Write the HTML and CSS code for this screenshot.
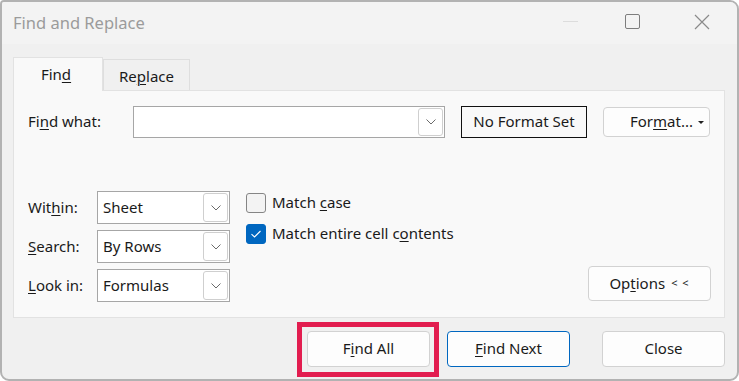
FILE: index.html
```html
<!DOCTYPE html>
<html lang="en">
<head>
  <meta charset="UTF-8">
  <meta name="viewport" content="width=device-width, initial-scale=1.0">
  <title>Find and Replace</title>
  <link rel="stylesheet" href="styles.css">
</head>
<body>
  <div class="window">
    <div class="titlebar">
      <span class="title">Find and Replace</span>
      <div class="controls">
        <span class="ctl ctl-min"><span class="min-line"></span></span>
        <span class="ctl"><span class="max-box"></span></span>
        <span class="ctl">
          <svg width="16" height="16" viewBox="0 0 16 16"><path d="M1 1 L15 15 M15 1 L1 15" stroke="#8a8a8a" stroke-width="1.2" fill="none"/></svg>
        </span>
      </div>
    </div>

    <div class="content">
      <div class="tabs">
        <div class="tab active">Fin<u>d</u></div>
        <div class="tab">Re<u>p</u>lace</div>
      </div>

      <div class="panel">
        <div class="find-row">
          <label class="find-label">Fi<u>n</u>d what:</label>
          <div class="combo combo-find">
            <span class="combo-text"></span>
            <span class="drop"><svg width="10" height="6" viewBox="0 0 10 6"><path d="M0.5 0.5 L5 5 L9.5 0.5" stroke="#6a6a6a" fill="none"/></svg></span>
          </div>
          <div class="format-preview">No Format Set</div>
          <button class="btn btn-format">For<u>m</u>at... <span class="tri"></span></button>
        </div>

        <div class="options-area">
          <div class="selects">
            <label>Wit<u>h</u>in:</label>
            <div class="combo">
              <span class="combo-text">Sheet</span>
              <span class="drop"><svg width="10" height="6" viewBox="0 0 10 6"><path d="M0.5 0.5 L5 5 L9.5 0.5" stroke="#6a6a6a" fill="none"/></svg></span>
            </div>
            <label><u>S</u>earch:</label>
            <div class="combo">
              <span class="combo-text">By Rows</span>
              <span class="drop"><svg width="10" height="6" viewBox="0 0 10 6"><path d="M0.5 0.5 L5 5 L9.5 0.5" stroke="#6a6a6a" fill="none"/></svg></span>
            </div>
            <label><u>L</u>ook in:</label>
            <div class="combo">
              <span class="combo-text">Formulas</span>
              <span class="drop"><svg width="10" height="6" viewBox="0 0 10 6"><path d="M0.5 0.5 L5 5 L9.5 0.5" stroke="#6a6a6a" fill="none"/></svg></span>
            </div>
          </div>

          <div class="checks">
            <div class="check-row">
              <span class="box"></span>
              <span class="check-label">Match <u>c</u>ase</span>
            </div>
            <div class="check-row">
              <span class="box checked">
                <svg width="12" height="10" viewBox="0 0 12 10"><path d="M1.5 5.2 L4.5 8 L10.5 2" stroke="#fff" stroke-width="1.1" fill="none"/></svg>
              </span>
              <span class="check-label">Match entire cell c<u>o</u>ntents</span>
            </div>
          </div>

          <button class="btn btn-options">Op<u>t</u>ions <span class="small">&lt; &lt;</span></button>
        </div>
      </div>

      <div class="footer">
        <div class="highlight">
          <button class="btn btn-foot">F<u>i</u>nd All</button>
        </div>
        <button class="btn btn-foot btn-default"><u>F</u>ind Next</button>
        <button class="btn btn-foot btn-close">Close</button>
      </div>
    </div>
  </div>
</body>
</html>
```

FILE: styles.css
```css
* {
  box-sizing: border-box;
}
body {
  margin: 0;
  background: #ffffff;
  font-family: "Noto Sans", "Open Sans", sans-serif;
  font-size: 15px;
  color: #1a1a1a;
}
u {
  text-decoration-thickness: 1px;
  text-underline-offset: 2px;
}
.window {
  width: 739px;
  height: 381px;
  border: 2px solid #b2b2b2;
  border-radius: 4px 9px 9px 9px;
  background: #f0f0f0;
  overflow: hidden;
}
.titlebar {
  height: 42px;
  background: #f3f3f3;
  display: flex;
  align-items: center;
  justify-content: space-between;
  padding-left: 11px;
}
.title {
  font-size: 16.5px;
  color: #9b9b9b;
  margin-top: -2px;
}
.controls {
  display: flex;
  height: 100%;
}
.ctl {
  width: 70px;
  display: flex;
  align-items: center;
  justify-content: center;
  margin-top: -3px;
}
.ctl-min {
  width: 54px;
}
.min-line {
  width: 15px;
  height: 1px;
  background: #dcdcdc;
}
.max-box {
  width: 15px;
  height: 15px;
  border: 1.2px solid #7d7d7d;
  border-radius: 2px;
}
.content {
  padding: 13px 11px 0 11px;
}
.tabs {
  display: flex;
  align-items: flex-end;
  height: 33px;
  position: relative;
  z-index: 1;
}
.tab {
  height: 31px;
  width: 87px;
  border: 1px solid #dedede;
  border-bottom: none;
  background: #f0f0f0;
  display: flex;
  align-items: center;
  justify-content: center;
  padding-top: 1px;
}
.tab.active {
  height: 34px;
  width: 90px;
  background: #f9f9f9;
  border-color: #e2e2e2;
  margin-bottom: -1px;
  padding-top: 0;
  padding-bottom: 1px;
  padding-right: 4px;
}
.panel {
  width: 712px;
  height: 228px;
  background: #f9f9f9;
  border: 1px solid #e2e2e2;
  padding: 15px 13px 0 13px;
}
.find-row {
  display: flex;
  align-items: center;
  height: 32px;
}
.find-label {
  width: 106px;
  padding-left: 1px;
  padding-bottom: 2px;
}
.selects label,
.combo-text,
.check-label {
  padding-bottom: 2px;
}
.combo {
  height: 33px;
  width: 133px;
  border: 1px solid #a6a6a6;
  background: #ffffff;
  display: flex;
  align-items: center;
  padding: 1px;
}
.combo-text {
  flex: 1;
  padding-left: 4px;
}
.drop {
  width: 25px;
  height: 29px;
  border: 1px solid #cfcfcf;
  border-radius: 3px;
  display: flex;
  align-items: center;
  justify-content: center;
}
.combo-find {
  width: 312px;
  height: 32px;
  margin-right: 16px;
}
.combo-find .drop {
  height: 28px;
}
.format-preview {
  width: 126px;
  height: 32px;
  border: 1.5px solid #111;
  display: flex;
  align-items: center;
  justify-content: center;
  padding-bottom: 2px;
  margin-right: 16px;
}
.btn {
  font-family: inherit;
  color: #1a1a1a;
  background: #fdfdfd;
  border: 1px solid #d2d2d2;
  border-radius: 4px;
  font-size: 15px;
  padding: 0 0 2px 0;
  display: flex;
  align-items: center;
  justify-content: center;
}
.btn-format {
  width: 107px;
  height: 30px;
  padding-left: 10px;
  position: relative;
}
.tri {
  position: absolute;
  right: 5px;
  top: 13px;
  border-left: 3px solid transparent;
  border-right: 3px solid transparent;
  border-top: 3px solid #222;
}
.options-area {
  display: flex;
  margin-top: 53px;
}
.selects {
  display: grid;
  grid-template-columns: 69px 133px;
  row-gap: 6px;
  align-items: center;
  padding-left: 1px;
}
.checks {
  margin-left: 16px;
  padding-top: 2px;
  display: flex;
  flex-direction: column;
  gap: 11px;
}
.check-row {
  display: flex;
  align-items: center;
  gap: 6px;
  height: 20px;
}
.box {
  width: 20px;
  height: 20px;
  border: 1px solid #858585;
  border-radius: 3px;
  background: #f3f3f3;
  display: flex;
  align-items: center;
  justify-content: center;
}
.box.checked {
  background: #0067c0;
  border-color: #0067c0;
}
.btn-options {
  margin-left: auto;
  align-self: flex-end;
  width: 123px;
  height: 35px;
  margin-bottom: 1px;
}
.small {
  font-size: 11px;
  margin-left: 6px;
  letter-spacing: 1px;
}
.footer {
  display: flex;
  align-items: center;
  height: 62px;
  padding-left: 294px;
}
.highlight {
  position: relative;
  width: 123px;
  height: 36px;
}
.highlight::after {
  content: "";
  position: absolute;
  left: -10px;
  top: -9px;
  right: -9px;
  bottom: -10px;
  border: 5px solid #e21d4f;
}
.btn-foot {
  width: 123px;
  height: 36px;
}
.btn-default {
  margin-left: 17px;
  border-color: #0067c0;
}
.btn-close {
  margin-left: 32px;
}
```
